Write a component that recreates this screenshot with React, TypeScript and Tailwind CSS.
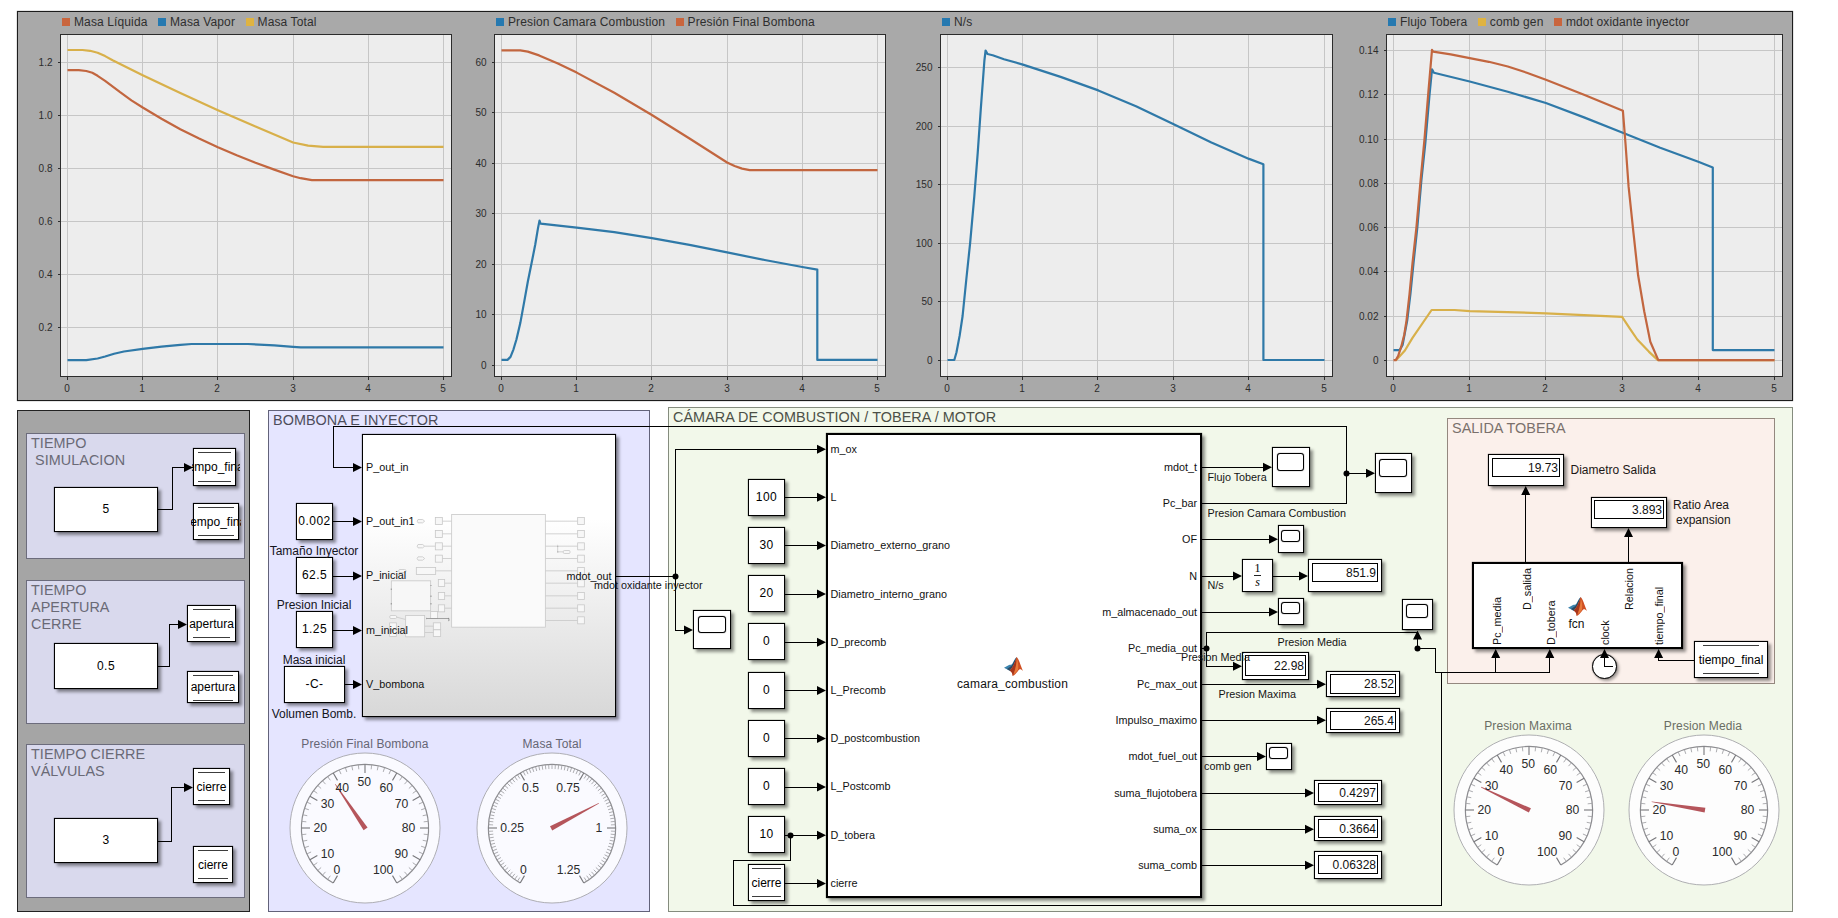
import type { ReactNode } from "react";

const BLUE = "#2f79a8";
const ORANGE = "#c2663f";
const YELLOW = "#d8b04a";

type Point = [number, number];
type Series = { color: string; points: Point[] };
type ChartProps = {
  legend: { label: string; swatch: string }[];
  legendClass: string;
  widthClass: string;
  width: number;
  originX: number;
  frame: [number, number];
  xTicks: number[];
  yTicks: [string, number][];
  y: (v: number) => number;
  series: Series[];
};

const FRAME_TOP = 34.5;
const FRAME_BOTTOM = 376.5;

function Chart({ legend, legendClass, widthClass, width, originX, frame, xTicks, yTicks, y, series }: ChartProps) {
  const x = (t: number) => xTicks[0] + ((xTicks[5] - xTicks[0]) * t) / 5;
  return (
    <div className={`flex flex-col ${widthClass}`}>
      <div className={`flex h-5 items-center gap-[10.5px] text-[12px] text-[#2e2e2e] ${legendClass}`}>
        {legend.map((l) => (
          <div key={l.label} className="flex items-center gap-1 whitespace-nowrap tracking-[0.12px]">
            <span className={`size-2 ${l.swatch}`} />
            <span>{l.label}</span>
          </div>
        ))}
      </div>
      <svg width={width} height={368} viewBox={`${originX} 32 ${width} 368`} className="block">
        <rect x={frame[0]} y={FRAME_TOP} width={frame[1] - frame[0]} height={FRAME_BOTTOM - FRAME_TOP} fill="#ededed" />
        <g stroke="#c6c6c6" shapeRendering="crispEdges">
          {xTicks.map((t) => (
            <line key={t} x1={t} x2={t} y1={FRAME_TOP} y2={FRAME_BOTTOM} />
          ))}
          {yTicks.map(([l, v]) => (
            <line key={l} x1={frame[0]} x2={frame[1]} y1={v} y2={v} />
          ))}
        </g>
        <g stroke="#2c2c2c" fill="none" shapeRendering="crispEdges">
          <rect x={frame[0]} y={FRAME_TOP} width={frame[1] - frame[0]} height={FRAME_BOTTOM - FRAME_TOP} />
          {xTicks.map((t) => (
            <line key={t} x1={t} x2={t} y1={FRAME_BOTTOM} y2={FRAME_BOTTOM + 3} />
          ))}
          {yTicks.map(([l, v]) => (
            <line key={l} x1={frame[0] - 3} x2={frame[0]} y1={v} y2={v} />
          ))}
        </g>
        {series.map((s, i) => (
          <polyline
            key={i}
            points={s.points.map(([t, v]) => `${x(t).toFixed(1)},${y(v).toFixed(1)}`).join(" ")}
            fill="none"
            stroke={s.color}
            strokeWidth={2.2}
            strokeLinejoin="round"
          />
        ))}
        <g fontSize={10} fill="#2c2c2c">
          {xTicks.map((t, i) => (
            <text key={t} x={t - 0.5} y={392} textAnchor="middle">
              {i}
            </text>
          ))}
          {yTicks.map(([l, v]) => (
            <text key={l} x={frame[0] - 8} y={v + 3.6} textAnchor="end">
              {l}
            </text>
          ))}
        </g>
      </svg>
    </div>
  );
}

function Block({ at, thick, children }: { at: string; thick?: boolean; children?: ReactNode }) {
  return (
    <div
      className={`absolute border-black bg-white shadow-[0_0_1px_rgba(0,0,0,0.7),3px_3px_3px_rgba(0,0,0,0.42)] ${
        thick ? "border-2" : "border"
      } ${at}`}
    >
      {children}
    </div>
  );
}

function Const({ at, children }: { at: string; children: ReactNode }) {
  return (
    <Block at={at}>
      <div className="flex h-full items-center justify-center pb-px text-[12px] tracking-[0.45px] text-black">
        {children}
      </div>
    </Block>
  );
}

function Store({ at, bars = "px-[4px] py-[3px]", clip = "inset-0", children }: { at: string; bars?: string; clip?: string; children: ReactNode }) {
  return (
    <Block at={at}>
      <div className={`flex h-full flex-col justify-between ${bars}`}>
        <div className="h-px bg-[#3c3c3c]" />
        <div className="h-px bg-[#3c3c3c]" />
      </div>
      <div className={`absolute flex items-center justify-center overflow-hidden text-[12px] whitespace-nowrap text-black ${clip}`}>
        {children}
      </div>
    </Block>
  );
}

function Scope({ at, pad, screen }: { at: string; pad: string; screen: string }) {
  return (
    <Block at={at}>
      <div className={pad}>
        <div className={`rounded-[3px] border border-black bg-white shadow-[0_0_1px_rgba(0,0,0,0.9)] ${screen}`} />
      </div>
    </Block>
  );
}

function Display({ at, pad = "p-[2px]", box, children }: { at: string; pad?: string; box: string; children: ReactNode }) {
  return (
    <Block at={at}>
      <div className={pad}>
        <div className={`flex items-center justify-end border border-black pr-[1px] text-[12px] text-[#111] ${box}`}>
          {children}
        </div>
      </div>
    </Block>
  );
}

function Signal({ at, children }: { at: string; children: ReactNode }) {
  return <div className={`absolute text-[10.8px] leading-none whitespace-nowrap text-[#141414] ${at}`}>{children}</div>;
}

function Caption({ at, children }: { at: string; children: ReactNode }) {
  return <div className={`absolute text-[12px] leading-none whitespace-nowrap ${at}`}>{children}</div>;
}

function VerticalPort({ at, children }: { at: string; children: ReactNode }) {
  return (
    <div className={`absolute flex w-[12px] rotate-180 items-center text-[10.8px] leading-[12px] whitespace-nowrap text-[#111] [writing-mode:vertical-rl] ${at}`}>
      {children}
    </div>
  );
}

function MatlabLogo({ at }: { at: string }) {
  return (
    <svg className={`absolute ${at}`} width={19} height={19} viewBox="0 0 57 57">
      <path d="M0 32 L15 24 C19 22 22 24 25 20 C30 12 33 4 38 0 C33 16 28 30 17 41 Z" fill="#3b83ad" />
      <path d="M9 36 L22 27 C28 20 32 8 38 0 C33 16 28 30 17 41 Z" fill="#2d4a63" />
      <path d="M38 0 C45 6 49 24 57 42 C50 35 46 36 42 42 C37 48 32 55 26 57 C26 49 23 43 17 41 C28 30 33 16 38 0 Z" fill="#cf4f22" />
      <path d="M38 0 C38 16 36 32 26 57 C26 49 23 43 17 41 C28 30 33 16 38 0 Z" fill="#a5361c" />
      <path d="M38 4 C42 14 44 24 42 38 C38 44 33 49 29 52 C35 36 38 20 38 4 Z" fill="#e8793a" />
    </svg>
  );
}

type GaugeLabel = [string, number, number];
const PERCENT: GaugeLabel[] = [
  ["0", -28.2, 41.5],
  ["10", -37.5, 25.2],
  ["20", -44.8, 0],
  ["30", -37.5, -24.8],
  ["40", -22.8, -40],
  ["50", -0.8, -46.8],
  ["60", 21.2, -40],
  ["70", 36.5, -24.8],
  ["80", 43.5, 0],
  ["90", 36.2, 25.2],
  ["100", 18.2, 41.5],
];
const MASS: GaugeLabel[] = [
  ["0", -28.5, 41.5],
  ["0.25", -39.8, 0],
  ["0.5", -21.5, -40],
  ["0.75", 16, -40],
  ["1", 47, 0],
  ["1.25", 16.5, 41.5],
];

function Gauge({ at, fraction, labels, step, majorEvery, face }: { at: string; fraction: number; labels: GaugeLabel[]; step: number; majorEvery: number; face: string }) {
  const ticks = Array.from({ length: 300 / step + 1 }, (_, i) => i);
  return (
    <svg className={`absolute ${at}`} width={152} height={152} viewBox="-76 -76 152 152">
      <circle r={75} fill={face} stroke="#a6a6aa" strokeWidth={0.9} />
      <path d="M-31.8 55.1 A63.6 63.6 0 1 1 31.8 55.1" fill="none" stroke="#8c8c90" strokeWidth={1.2} />
      {ticks.map((i) => {
        const major = i % majorEvery === 0;
        return (
          <line
            key={i}
            y1={-63.6}
            y2={major ? -55 : -59}
            stroke={major ? "#77777b" : "#a0a0a4"}
            strokeWidth={major ? 1.1 : 0.8}
            transform={`rotate(${-150 + i * step})`}
          />
        );
      })}
      <path d="M-2.4 1 L-0.3 -53 L0.3 -53 L2.4 1 Z" fill="#b5555b" transform={`rotate(${-150 + 300 * fraction})`} />
      <g fontSize={12.2} fill="#2b2b2b" textAnchor="middle">
        {labels.map(([l, lx, ly]) => (
          <text key={l} x={lx} y={ly + 4.4}>
            {l}
          </text>
        ))}
      </g>
    </svg>
  );
}

const right = (x: number, y: number) => `M${x} ${y} l-9 -4.5 v9 Z`;
const up = (x: number, y: number) => `M${x} ${y} l-4.5 9 h9 Z`;

const WIRES = [
  "M158 509.5 H172.5 V467.5 H186",
  "M158 666.5 H169.5 V624.5 H180",
  "M158 841.5 H171.5 V787.5 H186",
  "M1202 503.5 H1346.5 V426.5 H333.5 V467.5 H356",
  "M333 521.5 H356",
  "M333 576.5 H356",
  "M333 630.5 H356",
  "M345 684.5 H356",
  "M1346.5 473.5 H1368",
  "M616 576.5 H675.5",
  "M820 449.5 H675.5 V630.5 H688",
  "M785 497.5 H820",
  "M785 545.5 H820",
  "M785 594.5 H820",
  "M785 642.5 H820",
  "M785 690.5 H820",
  "M785 738.5 H820",
  "M785 787.5 H820",
  "M785 835.5 H820",
  "M785 883.5 H820",
  "M790.5 835.5 V860.5 H733.5 V905.5 H1441.5 V672.5",
  "M1202 467.5 H1266",
  "M1202 539.5 H1272",
  "M1202 576.5 H1236",
  "M1273 576.5 H1302",
  "M1202 612.5 H1272",
  "M1202 648.5 H1206.5",
  "M1417.5 632.5 H1206.5 V666.5 H1236",
  "M1202 684.5 H1320",
  "M1202 720.5 H1320",
  "M1202 756.5 H1260",
  "M1202 793.5 H1308",
  "M1202 829.5 H1308",
  "M1202 865.5 H1308",
  "M1417.5 636 V648.5 H1435.5 V672.5 H1549.5 V655",
  "M1495.5 672.5 V655",
  "M1525.5 562 V492",
  "M1628.5 562 V534",
  "M1694 660.5 H1658.5 V655",
  "M1604.5 655 V666.5 H1613",
];

const HEADS = [
  right(193, 467.5),
  right(187, 624.5),
  right(193, 787.5),
  right(362, 467.5),
  right(362, 521.5),
  right(362, 576),
  right(362, 630.5),
  right(362, 684.5),
  right(1375, 473.3),
  right(826, 449.3),
  right(693, 630),
  right(826, 497.3),
  right(826, 545.5),
  right(826, 594),
  right(826, 642.3),
  right(826, 690.4),
  right(826, 738.6),
  right(826, 787),
  right(826, 835.2),
  right(826, 883.4),
  right(1272, 467.3),
  right(1278, 539.3),
  right(1242, 576),
  right(1308, 576),
  right(1278, 612),
  right(1242, 666.3),
  right(1326, 684.2),
  right(1326, 720.3),
  right(1266, 756.5),
  right(1314, 793),
  right(1314, 829.2),
  right(1314, 865.3),
  up(1417.5, 630.5),
  up(1495.7, 649),
  up(1549.8, 649),
  up(1604.5, 649),
  up(1658.6, 649),
  up(1525.7, 486),
  up(1628.5, 528),
];

const DOTS: Point[] = [
  [1346.5, 473.5],
  [675.5, 576.5],
  [790.5, 835.5],
  [1206.5, 648.5],
  [1417.5, 648.5],
];

function Wires() {
  return (
    <svg className="pointer-events-none absolute inset-0" width={1838} height={918} viewBox="0 0 1838 918">
      <path d={WIRES.join(" ")} fill="none" stroke="#000" shapeRendering="crispEdges" />
      <path d={HEADS.join(" ")} fill="#000" />
      {DOTS.map(([cx, cy]) => (
        <circle key={`${cx}-${cy}`} cx={cx} cy={cy} r={3} fill="#000" />
      ))}
    </svg>
  );
}

function SubsystemPreview() {
  return (
    <svg className="absolute -top-px -left-px" width={254} height={283} viewBox="306 102 762 848" fill="#f7f7f7" stroke="#c8c8c8" strokeWidth={2.4}>
      {[363, 438, 475].map((y) => (
        <path key={y} d={`M474 ${y - 5} H488 L494 ${y} L488 ${y + 5} H474 Q469 ${y} 474 ${y - 5} Z`} />
      ))}
      <path d="M547 363 H575 M547 401 H575 M494 438 H526 M547 438 H575 M547 475 H575 M527 512 H575 M554 549 H575 M554 587 H575 M554 624 H575" />
      <path d="M856 363 H953 M856 401 H953 M856 438 H953 M856 475 H953 M856 512 H953 M856 549 H953 M856 587 H953 M856 624 H953 M856 661 H953" />
      {[352, 391, 428, 465].map((y) => (
        <rect key={y} x={526} y={y} width={21} height={21} />
      ))}
      {[538, 577, 614].map((y) => (
        <rect key={y} x={535} y={y} width={19} height={21} />
      ))}
      {[352, 391, 428, 465, 502, 539, 577, 614, 650].map((y) => (
        <rect key={y} x={953} y={y} width={20} height={21} />
      ))}
      <rect x={575} y={343} width={281} height={338} fill="#fafafa" />
      <rect x={469} y={502} width={58} height={21} />
      <rect x={394} y={542} width={118} height={90} />
      <rect x={512} y={634} width={21} height={21} />
      <rect x={389} y={668} width={20} height={21} />
      <rect x={389} y={689} width={20} height={20} />
      <rect x={520} y={668} width={22} height={21} />
      <rect x={520} y={689} width={22} height={20} />
      <path d="M494 678 H520 M494 697 H520 M410 651 L437 658" />
      <rect x={437} y={646} width={57} height={64} />
      <rect x={389} y={646} width={21} height={9} rx={4} />
      <rect x={416} y={508} width={22} height={9} rx={4} />
      <rect x={910} y={451} width={20} height={9} rx={3} />
      <path d="M893 434 V455 H910" fill="none" />
      <path d="M499 655 H567 V662" fill="none" stroke="#8f8f8f" />
      <path d="M499 655 h1 M566 655 h1 M566 661 h1 M893 438 v1 M893 455 v1 M394 566 v2 M394 610 v2 M513 555 v2 M513 587 v2 M513 610 v2" stroke="#707070" strokeWidth={4} />
    </svg>
  );
}

const INPUTS = ["m_ox", "L", "Diametro_externo_grano", "Diametro_interno_grano", "D_precomb", "L_Precomb", "D_postcombustion", "L_Postcomb", "D_tobera", "cierre"];
const OUTPUTS = ["mdot_t", "Pc_bar", "OF", "N", "m_almacenado_out", "Pc_media_out", "Pc_max_out", "Impulso_maximo", "mdot_fuel_out", "suma_flujotobera", "suma_ox", "suma_comb"];

const titleText = "text-[14.4px] tracking-[0.05px] leading-[17px] whitespace-pre";

export default function App() {
  return (
    <div className="relative flex h-[918px] w-[1838px] flex-col overflow-hidden bg-white pt-[11px] pl-[17px] font-['Liberation_Sans',Arial,sans-serif]">
      <section className="flex h-[390px] w-[1776px] shrink-0 border border-[#1c1c1c] bg-[#a9a9a9] shadow-[0_0_1px_rgba(0,0,0,0.6)]">
        <Chart
          legend={[
            { label: "Masa Líquida", swatch: "bg-[#c9653d]" },
            { label: "Masa Vapor", swatch: "bg-[#2679b0]" },
            { label: "Masa Total", swatch: "bg-[#dfb341]" },
          ]}
          legendClass="pl-[44px]"
          widthClass="w-[452px]"
          width={452}
          originX={18}
          frame={[60.5, 451.5]}
          xTicks={[67.5, 142.5, 217.5, 293.5, 368.5, 443.5]}
          yTicks={[["1.2", 62.5], ["1.0", 115.5], ["0.8", 168.5], ["0.6", 221.5], ["0.4", 274.5], ["0.2", 327.5]]}
          y={(v) => 62.5 + (1.2 - v) * 265}
          series={[
            { color: BLUE, points: [[0, 0.0767], [0.25, 0.0767], [0.4, 0.083], [0.5, 0.0906], [0.62, 0.101], [0.75, 0.1094], [1, 0.1195], [1.25, 0.128], [1.5, 0.1346], [1.65, 0.1377], [2.4, 0.1377], [2.75, 0.133], [3, 0.127], [3.1, 0.1252], [5, 0.1252]] },
            { color: ORANGE, points: [[0, 1.171], [0.15, 1.171], [0.25, 1.168], [0.33, 1.161], [0.4, 1.15], [0.5, 1.131], [0.7, 1.088], [0.85, 1.057], [1, 1.03], [1.25, 0.988], [1.5, 0.9484], [1.75, 0.913], [2, 0.8805], [2.25, 0.85], [2.5, 0.8214], [2.75, 0.796], [3, 0.771], [3.1, 0.7635], [3.25, 0.756], [5, 0.756]] },
            { color: YELLOW, points: [[0, 1.247], [0.2, 1.247], [0.3, 1.244], [0.4, 1.237], [0.5, 1.224], [0.6, 1.2085], [1, 1.152], [1.5, 1.085], [2, 1.02], [2.5, 0.9585], [3, 0.898], [3.2, 0.886], [3.4, 0.882], [5, 0.882]] },
          ]}
        />
        <Chart
          legend={[
            { label: "Presion Camara Combustion", swatch: "bg-[#2679b0]" },
            { label: "Presión Final Bombona", swatch: "bg-[#c9653d]" },
          ]}
          legendClass="pl-[26px]"
          widthClass="w-[430px]"
          width={430}
          originX={470}
          frame={[494.5, 885.5]}
          xTicks={[501.5, 576.5, 651.5, 727.5, 802.5, 877.5]}
          yTicks={[["60", 62.5], ["50", 112.5], ["40", 163.5], ["30", 213.5], ["20", 264.5], ["10", 314.5], ["0", 365.5]]}
          y={(v) => 365.5 - v * 5.05}
          series={[
            { color: BLUE, points: [[0, 1.1], [0.08, 1.1], [0.12, 1.7], [0.16, 3.2], [0.2, 5.2], [0.25, 8.4], [0.3, 12.5], [0.35, 16.6], [0.4, 20.3], [0.45, 24], [0.485, 27.2], [0.505, 28.7], [0.52, 28.1], [1, 27.3], [1.5, 26.4], [2, 25.2], [2.5, 23.9], [3, 22.4], [3.5, 20.9], [4, 19.5], [4.2, 19], [4.2, 1.1], [5, 1.1]] },
            { color: ORANGE, points: [[0, 62.4], [0.25, 62.4], [0.35, 62.15], [0.5, 61.4], [0.75, 59.8], [1, 58], [1.5, 54], [2, 49.6], [2.5, 44.95], [3, 40.2], [3.1, 39.5], [3.2, 39], [3.3, 38.7], [5, 38.7]] },
          ]}
        />
        <Chart
          legend={[{ label: "N/s", swatch: "bg-[#2679b0]" }]}
          legendClass="pl-[42px]"
          widthClass="w-[444px]"
          width={444}
          originX={900}
          frame={[940.5, 1332.5]}
          xTicks={[947.5, 1022.5, 1097.5, 1173.5, 1248.5, 1324.5]}
          yTicks={[["250", 67.5], ["200", 126.5], ["150", 184.5], ["100", 243.5], ["50", 301.5], ["0", 360.5]]}
          y={(v) => 360.5 - v * 1.172}
          series={[
            { color: BLUE, points: [[0, 0.4], [0.09, 0.4], [0.12, 7], [0.16, 21], [0.2, 38], [0.25, 70], [0.3, 100], [0.355, 140], [0.4, 177], [0.443, 216], [0.49, 256], [0.505, 264.5], [0.53, 261.5], [0.6, 260.5], [0.75, 257], [1, 252.5], [1.5, 242], [2, 230.5], [2.5, 217], [3, 201.5], [3.5, 186], [4, 172], [4.19, 167.5], [4.19, 0.4], [5, 0.4]] },
          ]}
        />
        <Chart
          legend={[
            { label: "Flujo Tobera", swatch: "bg-[#2679b0]" },
            { label: "comb gen", swatch: "bg-[#dfb341]" },
            { label: "mdot oxidante inyector", swatch: "bg-[#c9653d]" },
          ]}
          legendClass="pl-[44px]"
          widthClass="w-[448px]"
          width={448}
          originX={1344}
          frame={[1386.5, 1782.5]}
          xTicks={[1393.5, 1469.5, 1545.5, 1622.5, 1698.5, 1774.5]}
          yTicks={[["0.14", 50.5], ["0.12", 94.5], ["0.10", 139.5], ["0.08", 183.5], ["0.06", 227.5], ["0.04", 271.5], ["0.02", 316.5], ["0", 360.5]]}
          y={(v) => 360.5 - v * 2214}
          series={[
            { color: BLUE, points: [[0, 0.0047], [0.08, 0.0047], [0.12, 0.007], [0.18, 0.018], [0.222, 0.03], [0.262, 0.044], [0.312, 0.06], [0.366, 0.0815], [0.417, 0.098], [0.473, 0.12], [0.505, 0.1315], [0.53, 0.13], [1, 0.126], [1.5, 0.1214], [2, 0.1163], [2.5, 0.1098], [3, 0.103], [3.5, 0.0961], [4, 0.0898], [4.19, 0.0872], [4.19, 0.0047], [5, 0.0047]] },
            { color: YELLOW, points: [[0.03, 0], [0.15, 0.0045], [0.25, 0.0102], [0.5, 0.0228], [0.8, 0.0228], [1, 0.0223], [2, 0.0213], [3, 0.0197], [3.1, 0.0145], [3.2, 0.0095], [3.35, 0.004], [3.47, 0.0002], [5, 0.0002]] },
            { color: ORANGE, points: [[0, 0.0002], [0.03, 0.0002], [0.06, 0.002], [0.1, 0.006], [0.14, 0.0115], [0.17, 0.018], [0.21, 0.03], [0.25, 0.044], [0.3, 0.06], [0.355, 0.0815], [0.407, 0.1], [0.46, 0.1225], [0.505, 0.1403], [0.52, 0.1395], [0.75, 0.1383], [1, 0.1366], [1.25, 0.1349], [1.5, 0.1328], [1.75, 0.13], [2, 0.1268], [2.5, 0.12], [3.01, 0.1128], [3.045, 0.098], [3.085, 0.0785], [3.15, 0.0575], [3.21, 0.0385], [3.29, 0.0222], [3.37, 0.0085], [3.475, 0.0002], [5, 0.0002]] },
          ]}
        />
      </section>

      <div className="mt-[6px] flex h-[505px] shrink-0 items-end gap-[18px]">
        <section className="flex h-[502px] w-[233px] flex-col border border-[#222] bg-[#a5a5a5] pt-[22px] pl-[8px] text-[#6a6a76]">
          <div className={`h-[126px] w-[219px] border border-[#6c6c7c] bg-[#d9d9ed] pt-px pl-[4px] ${titleText}`}>
            <div>TIEMPO</div>
            <div> SIMULACION</div>
          </div>
          <div className={`mt-[21px] h-[144px] w-[219px] border border-[#6c6c7c] bg-[#d9d9ed] pt-px pl-[4px] ${titleText}`}>
            <div>TIEMPO</div>
            <div>APERTURA</div>
            <div>CERRE</div>
          </div>
          <div className={`mt-[20px] h-[154px] w-[219px] border border-[#6c6c7c] bg-[#d9d9ed] pt-px pl-[4px] ${titleText}`}>
            <div>TIEMPO CIERRE</div>
            <div>VÁLVULAS</div>
          </div>
        </section>
        <section className={`h-[502px] w-[382px] border border-[#62627a] bg-[#e5e5ff] pt-px pl-[4px] text-[#4d4d5c] ${titleText}`}>
          BOMBONA E INYECTOR
        </section>
        <section className="flex h-[505px] w-[1125px] justify-between border border-[#858c7e] bg-[#f2f8ea] pr-[17px] pl-[4px]">
          <div className={`pt-px text-[#4c5047] ${titleText}`}>CÁMARA DE COMBUSTION / TOBERA / MOTOR</div>
          <div className={`mt-[10px] h-[266px] w-[328px] border border-[#94887f] bg-[#fbf0eb] pt-px pl-[4px] text-[#7a706c] ${titleText}`}>
            SALIDA TOBERA
          </div>
        </section>
      </div>

      <Const at="left-[54px] top-[487px] h-[45px] w-[104px]">5</Const>
      <Store at="left-[193px] top-[448px] h-[38px] w-[43px]" clip="inset-y-0 -left-[2px] w-[48px]">
        <span className="-ml-[4px]">tiempo_final</span>
      </Store>
      <Store at="left-[193px] top-[503px] h-[37px] w-[46px]" clip="inset-y-0 -left-[3px] w-[50px]">
        <span className="ml-px">tiempo_final</span>
      </Store>
      <Const at="left-[54px] top-[643px] h-[46px] w-[104px]">0.5</Const>
      <Store at="left-[187px] top-[605px] h-[37px] w-[49px]" bars="px-[5px] py-[3px]">apertura</Store>
      <Store at="left-[187px] top-[671px] h-[32px] w-[52px]" bars="px-[5px] pt-[3px] pb-[1px]">apertura</Store>
      <Const at="left-[54px] top-[818px] h-[45px] w-[104px]">3</Const>
      <Store at="left-[193px] top-[768px] h-[37px] w-[37px]">cierre</Store>
      <Store at="left-[193px] top-[846px] h-[37px] w-[40px]">cierre</Store>

      <Block at="left-[362px] top-[434px] h-[283px] w-[254px]">
        <div className="h-full bg-linear-to-b from-white from-30% to-[#d8d8d8]" />
        <SubsystemPreview />
        <div className="absolute top-[5.3px] left-[3px] text-[10.8px] text-[#111]">
          {["P_out_in", "P_out_in1", "P_inicial", "m_inicial", "V_bombona"].map((p) => (
            <div key={p} className="flex h-[54.1px] items-center">
              {p}
            </div>
          ))}
        </div>
        <div className="absolute top-[134.5px] right-[3.5px] text-[10.8px] leading-[12px] text-[#111]">mdot_out</div>
      </Block>
      <Const at="left-[296px] top-[503px] h-[37px] w-[37px]">0.002</Const>
      <Const at="left-[296px] top-[557px] h-[37px] w-[37px]">62.5</Const>
      <Const at="left-[296px] top-[611px] h-[37px] w-[37px]">1.25</Const>
      <Const at="left-[284px] top-[666px] h-[37px] w-[61px]">-C-</Const>
      <Caption at="left-[264px] top-[544.5px] w-[100px] text-center text-[#14141c]">Tamaño Inyector</Caption>
      <Caption at="left-[264px] top-[599px] w-[100px] text-center text-[#14141c]">Presion Inicial</Caption>
      <Caption at="left-[264px] top-[654px] w-[100px] text-center text-[#14141c]">Masa inicial</Caption>
      <Caption at="left-[264px] top-[708px] w-[100px] text-center text-[#14141c]">Volumen Bomb.</Caption>

      <Block thick at="left-[826px] top-[433px] h-[465px] w-[376px]">
        <div className="flex h-full justify-between pr-[3px] pl-[2.5px] text-[10.8px] text-[#111]">
          <div className="-mt-[10px]">
            {INPUTS.map((p) => (
              <div key={p} className="flex h-[48.2px] items-center">
                {p}
              </div>
            ))}
          </div>
          <div className="mt-[14px]">
            {OUTPUTS.map((p) => (
              <div key={p} className="flex h-[36.18px] items-center justify-end">
                {p}
              </div>
            ))}
          </div>
        </div>
      </Block>
      <MatlabLogo at="left-[1004px] top-[657px]" />
      <Caption at="left-[932px] top-[678px] w-[161px] text-center tracking-[0.18px] text-[#111]">camara_combustion</Caption>

      <Const at="left-[748px] top-[479px] h-[37px] w-[37px]">100</Const>
      <Const at="left-[748px] top-[527px] h-[37px] w-[37px]">30</Const>
      <Const at="left-[748px] top-[575px] h-[37px] w-[37px]">20</Const>
      <Const at="left-[748px] top-[623px] h-[37px] w-[37px]">0</Const>
      <Const at="left-[748px] top-[672px] h-[37px] w-[37px]">0</Const>
      <Const at="left-[748px] top-[720px] h-[37px] w-[37px]">0</Const>
      <Const at="left-[748px] top-[768px] h-[37px] w-[37px]">0</Const>
      <Const at="left-[748px] top-[816px] h-[37px] w-[37px]">10</Const>
      <Store at="left-[748px] top-[864px] h-[37px] w-[37px]" bars="px-[3px] py-[3px]">cierre</Store>

      <Scope at="left-[693px] top-[610px] h-[39px] w-[38px]" pad="pt-[5px] pl-[4px]" screen="h-[17px] w-[28px]" />
      <Scope at="left-[1272px] top-[447px] h-[40px] w-[38px]" pad="pt-[5px] pl-[4px]" screen="h-[18px] w-[27px]" />
      <Scope at="left-[1375px] top-[453px] h-[40px] w-[37px]" pad="pt-[5px] pl-[3px]" screen="h-[18px] w-[28px]" />
      <Scope at="left-[1278px] top-[525px] h-[28px] w-[26px]" pad="pt-[4px] pl-[2px]" screen="h-[12px] w-[19px]" />
      <Scope at="left-[1278px] top-[598px] h-[27px] w-[26px]" pad="pt-[3px] pl-[2px]" screen="h-[12px] w-[19px]" />
      <Scope at="left-[1402px] top-[599px] h-[31px] w-[31px]" pad="pt-[4px] pl-[3px]" screen="h-[14px] w-[22px]" />
      <Scope at="left-[1266px] top-[743px] h-[27px] w-[26px]" pad="pt-[3px] pl-[2px]" screen="h-[12px] w-[19px]" />

      <Block at="left-[1242px] top-[559px] h-[33px] w-[31px]">
        <div className="flex h-full flex-col items-center justify-center font-['Liberation_Serif',serif] text-[12px] leading-[13px] text-black">
          <span>1</span>
          <span className="h-px w-[7px] bg-[#222]" />
          <span className="italic">s</span>
        </div>
      </Block>
      <Display at="left-[1308px] top-[559px] h-[33px] w-[74px]" pad="px-[3px] pt-[3px]" box="h-[19px]">851.9</Display>
      <Display at="left-[1242px] top-[652px] h-[28px] w-[67px]" box="h-[21px]">22.98</Display>
      <Display at="left-[1326px] top-[671px] h-[26px] w-[74px]" pad="px-[3px] pt-[2px]" box="h-[20px]">28.52</Display>
      <Display at="left-[1326px] top-[708px] h-[25px] w-[74px]" pad="px-[3px] pt-[2px]" box="h-[19px]">265.4</Display>
      <Display at="left-[1314px] top-[780px] h-[25px] w-[68px]" pad="px-[3px] pt-[2px]" box="h-[19px]">0.4297</Display>
      <Display at="left-[1314px] top-[816px] h-[25px] w-[68px]" pad="px-[3px] pt-[2px]" box="h-[19px]">0.3664</Display>
      <Display at="left-[1314px] top-[851px] h-[28px] w-[68px]" pad="px-[3px] pt-[3px]" box="h-[19px]">0.06328</Display>

      <Display at="left-[1488px] top-[454px] h-[32px] w-[76px]" pad="px-[3px] pt-[3px]" box="h-[19px]">19.73</Display>
      <Display at="left-[1591px] top-[497px] h-[31px] w-[76px]" pad="px-[2px] pt-[2px]" box="h-[19px]">3.893</Display>
      <Caption at="left-[1570.5px] top-[464px] text-[#1c1816]">Diametro Salida</Caption>
      <Caption at="left-[1673px] top-[499px] text-[#1c1816]">Ratio Area</Caption>
      <Caption at="left-[1676px] top-[514px] text-[#1c1816]">expansion</Caption>

      <Block thick at="left-[1472px] top-[562px] h-[87px] w-[211px]" />
      <VerticalPort at="left-[1491px] top-[597px] h-[48px]">Pc_media</VerticalPort>
      <VerticalPort at="left-[1521px] top-[568px] h-[42px]">D_salida</VerticalPort>
      <VerticalPort at="left-[1545px] top-[600px] h-[45px]">D_tobera</VerticalPort>
      <VerticalPort at="left-[1599px] top-[619px] h-[26px]">clock</VerticalPort>
      <VerticalPort at="left-[1623px] top-[568px] h-[42px]">Relacion</VerticalPort>
      <VerticalPort at="left-[1653px] top-[587px] h-[58px]">tiempo_final</VerticalPort>
      <MatlabLogo at="left-[1568px] top-[597px]" />
      <Caption at="left-[1556px] top-[618px] w-[41px] text-center text-[#111]">fcn</Caption>
      <div className="absolute top-[654px] left-[1592px] size-[25px] rounded-full border border-black bg-white shadow-[0_0_1px_rgba(0,0,0,0.8),2px_2px_3px_rgba(0,0,0,0.35)]" />
      <Store at="left-[1694px] top-[641px] h-[37px] w-[74px]" bars="px-[8px] py-[3px]">tiempo_final</Store>

      <Wires />

      <Signal at="top-[579.5px] left-[594px]">mdot oxidante inyector</Signal>
      <Signal at="top-[472px] left-[1207.5px]">Flujo Tobera</Signal>
      <Signal at="top-[508px] left-[1207.5px]">Presion Camara Combustion</Signal>
      <Signal at="top-[580px] left-[1207.5px]">N/s</Signal>
      <Signal at="top-[637px] left-[1277.5px]">Presion Media</Signal>
      <Signal at="top-[652px] left-[1181px]">Presion Media</Signal>
      <Signal at="top-[689px] left-[1218.5px]">Presion Maxima</Signal>
      <Signal at="top-[761px] left-[1204px]">comb gen</Signal>

      <Caption at="top-[738px] left-[285px] w-[160px] text-center tracking-[0.12px] text-[#666674]">Presión Final Bombona</Caption>
      <Caption at="top-[738px] left-[472px] w-[160px] text-center tracking-[0.12px] text-[#666674]">Masa Total</Caption>
      <Caption at="top-[720px] left-[1448px] w-[160px] text-center tracking-[0.12px] text-[#6a6e64]">Presion Maxima</Caption>
      <Caption at="top-[720px] left-[1623px] w-[160px] text-center tracking-[0.12px] text-[#6a6e64]">Presion Media</Caption>
      <Gauge at="top-[752px] left-[289px]" fraction={0.386} labels={PERCENT} step={6} majorEvery={5} face="#fafaff" />
      <Gauge at="top-[752px] left-[476px]" fraction={0.707} labels={MASS} step={3} majorEvery={20} face="#fafaff" />
      <Gauge at="top-[734px] left-[1453px]" fraction={0.2852} labels={PERCENT} step={6} majorEvery={5} face="#fdfdfd" />
      <Gauge at="top-[734px] left-[1628px]" fraction={0.2298} labels={PERCENT} step={6} majorEvery={5} face="#fdfdfd" />
    </div>
  );
}
